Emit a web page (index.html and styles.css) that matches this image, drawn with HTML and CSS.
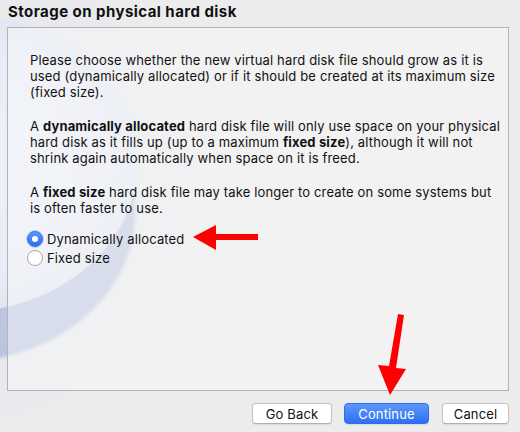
FILE: index.html
```html
<!DOCTYPE html>
<html>
<head>
<meta charset="utf-8">
<link rel="stylesheet" href="styles.css">
</head>
<body>
<div class="dialog">
  <h1 class="title">Storage on physical hard disk</h1>
  <div class="panel">
    <p class="para">Please choose whether the new virtual hard disk file should grow as it is<br>used (dynamically allocated) or if it should be created at its maximum size<br>(fixed size).</p>
    <p class="para">A <b>dynamically allocated</b> hard disk file will only use space on your physical<br>hard disk as it fills up (up to a maximum <b>fixed size</b>), although it will not<br>shrink again automatically when space on it is freed.</p>
    <p class="para">A <b>fixed size</b> hard disk file may take longer to create on some systems but<br>is often faster to use.</p>
    <div class="options">
      <label class="option"><span class="radio radio-on"><span class="dot"></span></span>Dynamically allocated</label>
      <label class="option"><span class="radio"></span>Fixed size</label>
    </div>
  </div>
  <div class="buttons">
    <button class="btn">Go Back</button>
    <button class="btn btn-primary">Continue</button>
    <button class="btn">Cancel</button>
  </div>
  <svg class="arrow arrow-left" width="70" height="30" viewBox="0 0 70 30">
    <polygon points="1,13 24,1 24,10 66,10 66,16 24,16 24,26" fill="#ff0000"/>
  </svg>
  <svg class="arrow arrow-down" width="40" height="84" viewBox="0 0 40 84">
    <polygon points="22,1 28,2 20,55 30,56 14,82 2,52 13,53" fill="#ff0000"/>
  </svg>
</div>
</body>
</html>
```
FILE: styles.css
```css
html, body {
  margin: 0;
  padding: 0;
}
body {
  width: 520px;
  height: 432px;
  overflow: hidden;
  font-family: Inter, "Liberation Sans", Arial, sans-serif;
  color: #111;
  background-color: #ececec;
  background-image:
    radial-gradient(ellipse 178px 150px at -40px 163px, #eef1f9 0%, #e8ecf6 80%, #e1e6f2 99%, rgba(0,0,0,0) 100%),
    radial-gradient(ellipse 178px 152px at -40px 212px, #c2cae3 0%, #bcc5e0 97%, rgba(0,0,0,0) 100%),
    radial-gradient(ellipse 260px 240px at -60px 190px, rgba(225,228,236,0.9) 0%, rgba(232,233,238,0.6) 96%, rgba(0,0,0,0) 100%);
  background-repeat: no-repeat;
}
.dialog {
  position: relative;
  width: 520px;
  height: 432px;
}
.title {
  margin: 0;
  padding: 3px 8px 0 8px;
  height: 24px;
  font-size: 15px;
  font-weight: 700;
  line-height: 17px;
  letter-spacing: 0.45px;
  color: #111;
}
.panel {
  margin-left: 7px;
  width: 502px;
  height: 364px;
  box-sizing: border-box;
  border: 1px solid #b3b3b3;
  background: rgba(250, 250, 250, 0.45);
  padding: 24px 0 0 22px;
  font-size: 13px;
  line-height: 16px;
  letter-spacing: 0.15px;
  white-space: nowrap;
}
.para {
  margin: 0 0 18px 0;
}
.para b {
  font-weight: 700;
}
.para:nth-of-type(3) {
  margin-bottom: 13px;
}
.options {
  display: flex;
  flex-direction: column;
}
.option {
  display: flex;
  align-items: center;
  height: 19px;
  margin-left: -3px;
}
.radio {
  width: 14px;
  height: 14px;
  border-radius: 50%;
  border: 1px solid #a9a9a9;
  background: #fff;
  margin-right: 4px;
  display: flex;
  align-items: center;
  justify-content: center;
  flex: none;
}
.radio-on {
  border-color: #2f6fe9;
  background: linear-gradient(#5a9af8, #2d6fee);
  box-shadow: 0 0 0 1px rgba(80,140,250,0.35);
}
.dot {
  width: 6px;
  height: 6px;
  border-radius: 50%;
  background: #fff;
}
.buttons {
  display: flex;
  justify-content: flex-end;
  gap: 12px;
  padding: 12px 11px 0 0;
}
.btn {
  height: 21px;
  box-sizing: border-box;
  padding: 0;
  font-family: Inter, "Liberation Sans", Arial, sans-serif;
  font-size: 13px;
  letter-spacing: 0.15px;
  color: #111;
  background: #fff;
  border: 1px solid #c4c4c4;
  border-bottom-color: #b0b0b0;
  border-radius: 4px;
  box-shadow: 0 1px 1px rgba(0,0,0,0.08);
}
.btn:nth-child(1) { width: 80px; }
.btn:nth-child(2) { width: 85px; }
.btn:nth-child(3) { width: 67px; margin-left: 1px; }
.btn-primary {
  color: #fff;
  border-color: #2b6cf0;
  background: linear-gradient(#5d98f8, #2f6ff2);
}
.arrow {
  position: absolute;
}
.arrow-left {
  left: 192px;
  top: 224px;
}
.arrow-down {
  left: 376px;
  top: 313px;
}
```
